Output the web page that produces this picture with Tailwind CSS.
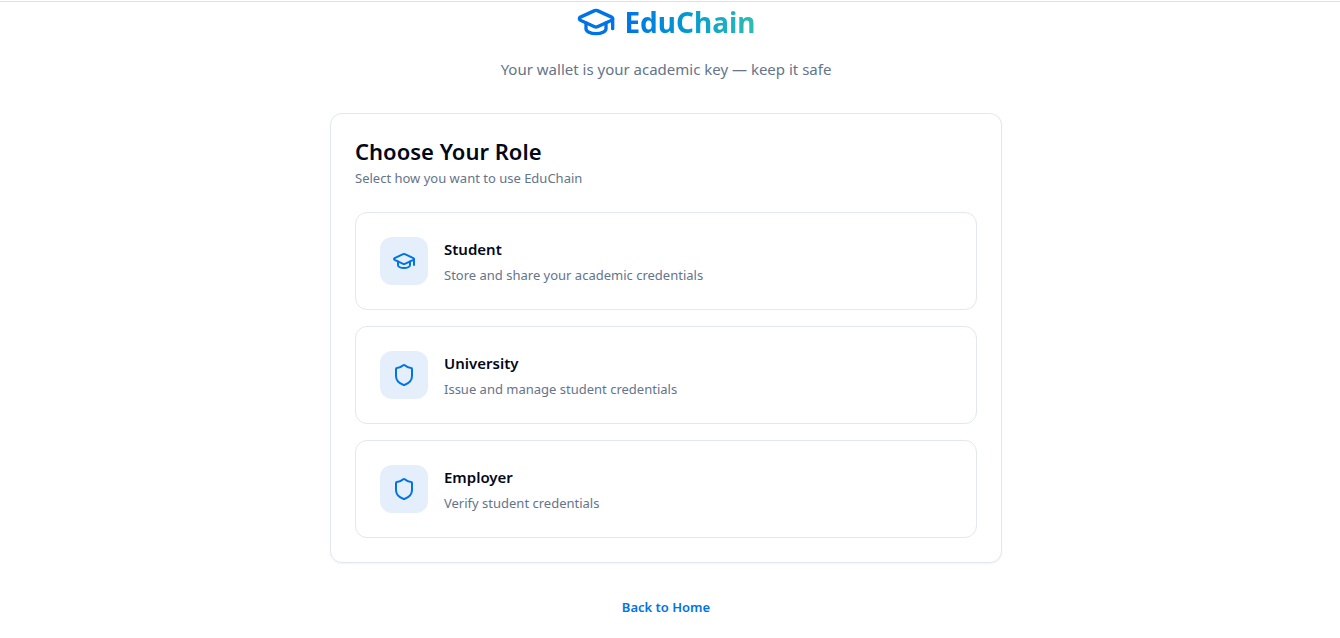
<!DOCTYPE html>
<html lang="en">
<head>
    <meta charset="UTF-8">
    <meta name="viewport" content="width=device-width, initial-scale=1.0">
    <title>EduChain - Choose Your Role</title>
    <script src="https://cdn.jsdelivr.net/npm/@tailwindcss/browser@4"></script>
</head>
<body class="min-h-screen bg-white font-['Segoe_UI','Noto_Sans',sans-serif] text-[#020817]">
    <div class="h-0.5 border-b border-[#dfe1e1]"></div>

    <main class="pr-2">
        <div class="mx-auto max-w-2xl">
            <!-- Brand -->
            <header class="mb-8 text-center">
                <div class="mb-4 flex h-[39px] items-center justify-center gap-2">
                    <svg class="size-10 text-[#0073e6]" viewBox="0 0 24 24" fill="none" stroke="currentColor" stroke-width="2" stroke-linecap="round" stroke-linejoin="round" aria-hidden="true">
                        <path d="M21.42 10.922a1 1 0 0 0-.019-1.838L12.83 5.18a2 2 0 0 0-1.66 0L2.6 9.08a1 1 0 0 0 0 1.832l8.57 3.908a2 2 0 0 0 1.66 0z"/>
                        <path d="M22 10v6"/>
                        <path d="M6 12.5V16a6 3 0 0 0 12 0v-3.5"/>
                    </svg>
                    <h1 class="bg-linear-to-r from-[#0073e6] to-[#2ebdb3] bg-clip-text text-[28px] leading-9 font-bold text-transparent">EduChain</h1>
                </div>
                <p class="text-[15px] leading-6 text-[#64748b]">Your wallet is your academic key — keep it safe</p>
            </header>

            <!-- Role selection -->
            <section class="rounded-xl border border-[#e2e8f0] bg-white p-6 shadow-xs">
                <div class="mb-6">
                    <h2 class="mb-1 text-[22px] leading-[26px] font-semibold">Choose Your Role</h2>
                    <p class="text-[13px] leading-5 text-[#64748b]">Select how you want to use EduChain</p>
                </div>

                <div class="flex flex-col gap-4">
                    <button type="button" class="flex cursor-pointer items-center gap-4 rounded-xl border border-[#e2e8f0] p-6 text-left hover:border-[#0073e6]">
                        <span class="flex size-12 items-center justify-center rounded-xl bg-[#e5effc] text-[#0073e6]">
                            <svg class="size-6" viewBox="0 0 24 24" fill="none" stroke="currentColor" stroke-width="2" stroke-linecap="round" stroke-linejoin="round" aria-hidden="true">
                                <path d="M21.42 10.922a1 1 0 0 0-.019-1.838L12.83 5.18a2 2 0 0 0-1.66 0L2.6 9.08a1 1 0 0 0 0 1.832l8.57 3.908a2 2 0 0 0 1.66 0z"/>
                                <path d="M22 10v6"/>
                                <path d="M6 12.5V16a6 3 0 0 0 12 0v-3.5"/>
                            </svg>
                        </span>
                        <span class="flex flex-col gap-1">
                            <span class="text-[15px] leading-6 font-semibold">Student</span>
                            <span class="text-[13px] leading-5 text-[#64748b]">Store and share your academic credentials</span>
                        </span>
                    </button>

                    <button type="button" class="flex cursor-pointer items-center gap-4 rounded-xl border border-[#e2e8f0] p-6 text-left hover:border-[#0073e6]">
                        <span class="flex size-12 items-center justify-center rounded-xl bg-[#e5effc] text-[#0073e6]">
                            <svg class="size-6" viewBox="0 0 24 24" fill="none" stroke="currentColor" stroke-width="2" stroke-linecap="round" stroke-linejoin="round" aria-hidden="true">
                                <path d="M20 13c0 5-3.5 7.5-7.66 8.95a1 1 0 0 1-.67-.01C7.5 20.5 4 18 4 13V6a1 1 0 0 1 1-1c2 0 4.5-1.2 6.24-2.72a1.17 1.17 0 0 1 1.52 0C14.51 3.81 17 5 19 5a1 1 0 0 1 1 1z"/>
                            </svg>
                        </span>
                        <span class="flex flex-col gap-1">
                            <span class="text-[15px] leading-6 font-semibold">University</span>
                            <span class="text-[13px] leading-5 text-[#64748b]">Issue and manage student credentials</span>
                        </span>
                    </button>

                    <button type="button" class="flex cursor-pointer items-center gap-4 rounded-xl border border-[#e2e8f0] p-6 text-left hover:border-[#0073e6]">
                        <span class="flex size-12 items-center justify-center rounded-xl bg-[#e5effc] text-[#0073e6]">
                            <svg class="size-6" viewBox="0 0 24 24" fill="none" stroke="currentColor" stroke-width="2" stroke-linecap="round" stroke-linejoin="round" aria-hidden="true">
                                <path d="M20 13c0 5-3.5 7.5-7.66 8.95a1 1 0 0 1-.67-.01C7.5 20.5 4 18 4 13V6a1 1 0 0 1 1-1c2 0 4.5-1.2 6.24-2.72a1.17 1.17 0 0 1 1.52 0C14.51 3.81 17 5 19 5a1 1 0 0 1 1 1z"/>
                            </svg>
                        </span>
                        <span class="flex flex-col gap-1">
                            <span class="text-[15px] leading-6 font-semibold">Employer</span>
                            <span class="text-[13px] leading-5 text-[#64748b]">Verify student credentials</span>
                        </span>
                    </button>
                </div>
            </section>

            <div class="mt-8 flex justify-center">
                <a href="#" class="text-[13px] leading-6 font-semibold text-[#0073e6] hover:underline">Back to Home</a>
            </div>
        </div>
    </main>
</body>
</html>
